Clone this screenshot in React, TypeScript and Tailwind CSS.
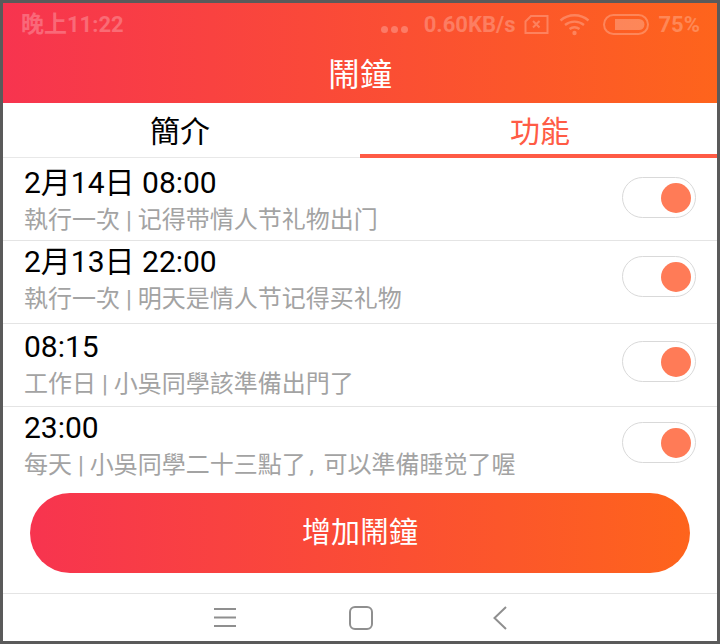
import type { ReactNode } from "react";

const CJK = "font-['Roboto','Noto_Sans_CJK_TC',sans-serif]";

const rows: { title: string; sub: ReactNode; pad: string; tg: string }[] = [
  { title: "2月14日 08:00", sub: "執行一次 | 记得带情人节礼物出门", pad: "pt-[6px]", tg: "pt-[19px]" },
  { title: "2月13日 22:00", sub: "執行一次 | 明天是情人节记得买礼物", pad: "pt-[2px]", tg: "pt-[15px]" },
  { title: "08:15", sub: "工作日 | 小吳同學該準備出門了", pad: "pt-[4px]", tg: "pt-[17px]" },
  {
    title: "23:00",
    sub: (
      <>
        每天 | 小吳同學二十三點了<span className="mx-[3.5px]">,</span> 可以準備睡觉了喔
      </>
    ),
    pad: "pt-[2px]",
    tg: "pt-[15px]",
  },
];

function Row({ r, last }: { r: (typeof rows)[number]; last?: boolean }) {
  return (
    <div className={`flex justify-between pl-[21px] pr-[21px] h-[83px] ${last ? "" : "border-b border-[#e4e4e4]"}`}>
      <div className={r.pad}>
        <div className="text-[30px] leading-[38px] text-black">{r.title}</div>
        <div className="text-[24px] leading-[36px] text-[#a3a3a3]">{r.sub}</div>
      </div>
      <div className={r.tg}>
        <div className="w-[74px] h-[41px] rounded-full border border-[#d9d9d9] bg-white flex items-center justify-end pr-[4px]">
          <div className="w-[30px] h-[30px] rounded-full bg-[#ff7b57]" />
        </div>
      </div>
    </div>
  );
}

export default function App() {
  return (
    <div className={`w-[720px] h-[644px] border-[3px] border-[#5a5a5a] bg-white flex flex-col overflow-hidden ${CJK}`}>
      <div className="h-[100px] bg-linear-to-r/srgb from-[#f7344f] to-[#fe641c] flex flex-col">
        <div className="h-[43px] flex items-center justify-between pl-[18px] pr-[17px] text-[22px] font-bold text-white/25 leading-none">
          <span><span className="text-[23px]">晚上</span>11:22</span>
          <div className="flex items-center">
            <div className="flex gap-[3px] mr-[16px] mt-[10px]">
              <span className="w-[7px] h-[7px] rounded-full bg-white/25" />
              <span className="w-[7px] h-[7px] rounded-full bg-white/25" />
              <span className="w-[7px] h-[7px] rounded-full bg-white/25" />
            </div>
            <span>0.60KB/s</span>
            <svg className="ml-[9px]" width="25" height="21" viewBox="0 0 25 21" fill="none" stroke="rgba(255,255,255,0.25)" strokeWidth="2">
              <path d="M7 2H23.5V19H1.5V7.5Z" />
              <path d="M9 7L15.5 13.5M15.5 7L9 13.5" />
            </svg>
            <svg className="ml-[10px]" width="31" height="23" viewBox="0 0 31 23" fill="none" stroke="rgba(255,255,255,0.25)" strokeWidth="2.4">
              <path d="M1.5 7.5C9.5 0.5 21.5 0.5 29.5 7.5" />
              <path d="M6 12C11.5 7.5 19.5 7.5 25 12" />
              <path d="M10.5 16C13.5 13.8 17.5 13.8 20.5 16" />
              <circle cx="15.5" cy="20" r="2.2" fill="rgba(255,255,255,0.25)" stroke="none" />
            </svg>
            <svg className="ml-[13px]" width="46" height="21" viewBox="0 0 46 21" fill="none">
              <rect x="1" y="1" width="44" height="19" rx="9.5" stroke="rgba(255,255,255,0.25)" strokeWidth="2" />
              <path d="M12 5H36A5.5 5.5 0 0 1 36 16H12Z" fill="rgba(255,255,255,0.25)" />
            </svg>
            <span className="ml-[9px]">75%</span>
          </div>
        </div>
        <div className="text-center text-white text-[32px] leading-[40px] mt-[9px]">鬧鐘</div>
      </div>

      <div className="flex h-[55px] border-b border-[#e8e8e8] text-[30px]">
        <div className="flex-1 text-center leading-[58px] text-black pr-[3px]">簡介</div>
        <div className="flex-1 text-center leading-[58px] text-[#ff5b45] border-b-[4px] border-[#ff5b45] h-[55px] pl-[3px]">功能</div>
      </div>

      <div className="flex flex-col">
        {rows.map((r, i) => (
          <Row key={r.title} r={r} last={i === 3} />
        ))}
      </div>

      <div className="mx-[27px] mt-[3px] h-[80px] rounded-full bg-linear-to-r/srgb from-[#f7344f] to-[#fe641c] flex items-center justify-center text-white text-[29px] pt-[2px]">
        增加鬧鐘
      </div>

      <div className="mt-[20px] flex-1 border-t border-[#e4e4e4] flex items-center pl-[211px]">
        <svg width="22" height="21" viewBox="0 0 22 21" stroke="#8f8f8f" strokeWidth="2">
          <path d="M0 2H22M0 10.5H22M0 19H22" />
        </svg>
        <svg className="ml-[113px]" width="24" height="24" viewBox="0 0 24 24" fill="none" stroke="#8f8f8f" strokeWidth="2">
          <rect x="1" y="1" width="22" height="22" rx="5" />
        </svg>
        <svg className="ml-[120px]" width="14" height="24" viewBox="0 0 14 24" fill="none" stroke="#8f8f8f" strokeWidth="2">
          <path d="M13 1L1.5 12L13 23" />
        </svg>
      </div>
    </div>
  );
}
